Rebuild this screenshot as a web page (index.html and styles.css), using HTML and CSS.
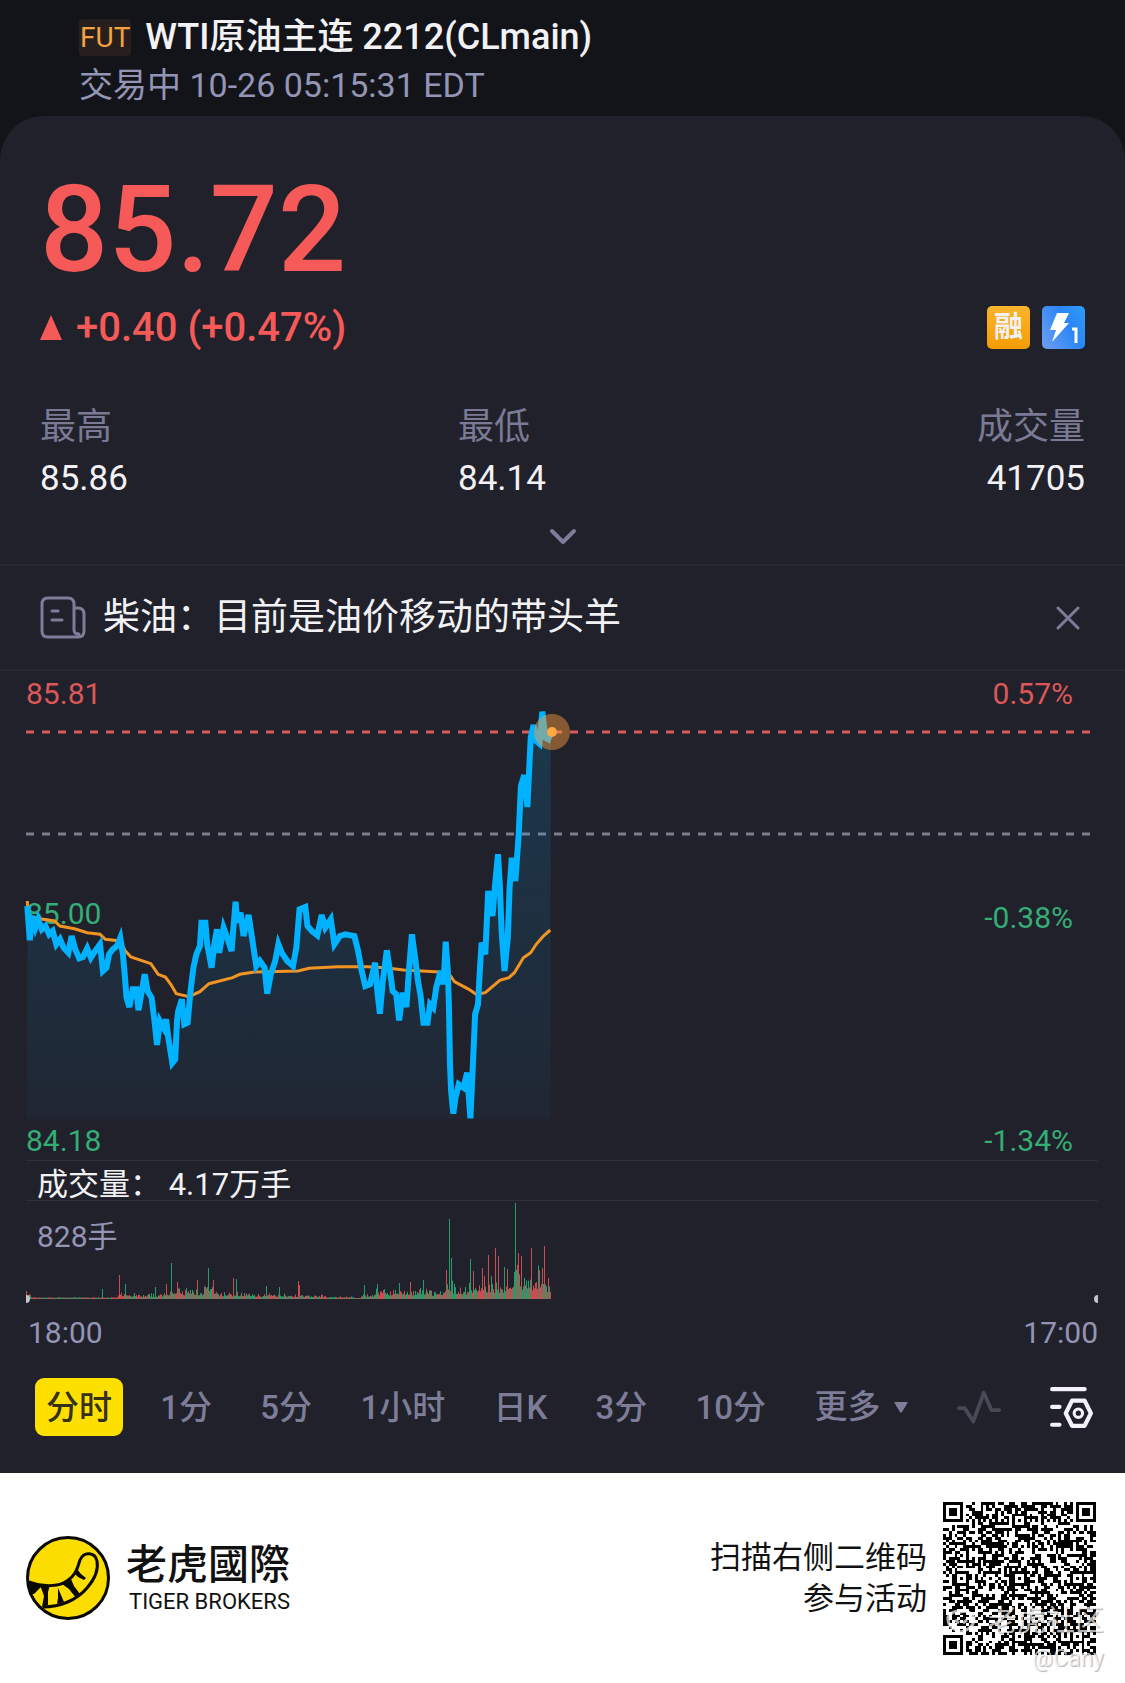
FILE: index.html
```html
<!DOCTYPE html>
<html lang="zh-CN">
<head>
    <meta charset="UTF-8">
    <meta name="viewport" content="width=device-width, initial-scale=1.0">
    <title>WTI原油主连 2212(CLmain)</title>
    <link rel="stylesheet" href="styles.css">
</head>
<body>
    <header class="header">
        <h1 class="title"><span class="tag">FUT</span>WTI原油主连 2212(CLmain)</h1>
        <p class="status">交易中 10-26 05:15:31 EDT</p>
    </header>

    <main class="card">
        <section class="quote">
            <div class="price">85.72</div>
            <div class="change-row">
                <div class="change">
                    <svg class="up" viewBox="0 0 22 25"><path d="M11 0L22 25H0Z" fill="#f65a58"/></svg>
                    <span>+0.40 (+0.47%)</span>
                </div>
                <div class="badges">
                    <span class="badge margin">融</span>
                    <span class="badge level">
                        <svg viewBox="0 0 43 43">
                            <path d="M15 7H27L22 17H27L10 36L14 24H8Z" fill="#fff"/>
                            <path d="M30 23H34V37" fill="none" stroke="#fff" stroke-width="3"/>
                        </svg>
                    </span>
                </div>
            </div>
            <dl class="stats">
                <div><dt>最高</dt><dd>85.86</dd></div>
                <div><dt>最低</dt><dd>84.14</dd></div>
                <div class="right"><dt>成交量</dt><dd>41705</dd></div>
            </dl>
            <button class="expand" aria-label="展开">
                <svg viewBox="0 0 28 18"><path d="M3 3L14 14L25 3"/></svg>
            </button>
        </section>

        <section class="news">
            <svg class="news-icon" viewBox="0 0 46 44">
                <path d="M34 41H8Q2 41 2 35V8Q2 2 8 2H28Q34 2 34 8V34Q34 38 39 38M34 12H38Q44 12 44 18V35Q44 41 38 41H32M12 15H18M12 24H22"/>
            </svg>
            <a href="#" class="news-link">柴油：目前是油价移动的带头羊</a>
            <button class="close" aria-label="关闭">
                <svg viewBox="0 0 26 26"><path d="M3 3L23 23M23 3L3 23"/></svg>
            </button>
        </section>

        <section class="chart">
            <svg class="plot" viewBox="0 0 1072 489">
                <defs>
                    <linearGradient id="fade" x1="0" y1="40" x2="0" y2="448" gradientUnits="userSpaceOnUse">
                        <stop offset="0" stop-color="#00b2ff" stop-opacity="0.16"/>
                        <stop offset="0.85" stop-color="#00b2ff" stop-opacity="0.06"/>
                        <stop offset="1" stop-color="#00b2ff" stop-opacity="0.03"/>
                    </linearGradient>
                </defs>
                <path class="dash last" d="M0 61H1066"/>
                <path class="dash prev" d="M0 163H1066"/>
                <path id="area" fill="url(#fade)"/>
                <text class="red" x="0" y="33">85.81</text>
                <text class="green" x="0" y="253">85.00</text>
                <text class="green" x="0" y="480">84.18</text>
                <text class="red end" x="1047" y="33">0.57%</text>
                <text class="green end" x="1047" y="257">-0.38%</text>
                <text class="green end" x="1047" y="480">-1.34%</text>
                <path id="average"/>
                <path id="line"/>
                <circle cx="526" cy="61" r="18" fill="#ffa03c" fill-opacity="0.45"/>
                <circle cx="526" cy="61" r="5" fill="#ffa940"/>
            </svg>
            <div class="volume-title">成交量<span class="colon">：</span> 4.17万手</div>
            <svg class="volume" viewBox="0 0 1072 104">
                <text x="11" y="46">828手</text>
                <path id="volumeRed" stroke="#c94d50"/>
                <path id="volumeGreen" stroke="#259c69"/>
                <path d="M0 94A4 4 0 0 1 0 102ZM1072 94A4 4 0 0 0 1072 102Z" fill="#c4c4c8"/>
            </svg>
            <div class="time"><span>18:00</span><span>17:00</span></div>
        </section>

        <nav class="tabs">
            <button class="tab active">分时</button>
            <button class="tab">1分</button>
            <button class="tab">5分</button>
            <button class="tab">1小时</button>
            <button class="tab">日K</button>
            <button class="tab">3分</button>
            <button class="tab">10分</button>
            <button class="tab more">更多<svg viewBox="0 0 14 11"><path d="M1 0H13Q14 0 13.500 1L8 10Q7 11 6 10L0.500 1Q0 0 1 0Z" fill="#7d7d98"/></svg></button>
            <button class="tab tool" aria-label="画线">
                <svg viewBox="0 0 46 38"><path d="M2 20H8L17 34L28 4L36 22H44" fill="none" stroke="#494955" stroke-width="4" stroke-linecap="round" stroke-linejoin="round"/></svg>
            </button>
            <button class="tab tool" aria-label="设置">
                <svg viewBox="0 0 42 40">
                    <path d="M3 3H34M3 20H10M3 37H10" fill="none" stroke="#f2f2f8" stroke-width="4" stroke-linecap="round"/>
                    <path d="M22 14H34L40 26L34 38H22L16 26Z" fill="none" stroke="#f2f2f8" stroke-width="4" stroke-linejoin="round"/>
                    <circle cx="28" cy="26" r="4" fill="none" stroke="#f2f2f8" stroke-width="3"/>
                </svg>
            </button>
        </nav>
    </main>

    <footer class="footer">
        <svg class="logo" viewBox="0 0 84 84">
            <circle cx="42" cy="42" r="40.500" fill="#fbdd00" stroke="#0b0906" stroke-width="3"/>
            <path d="M3 46C16 51 33 51 41 45C50 39 51 33 54 24C58 15 69 16 71 25C73 35 67 45 61 52C51 64 34 71 17 71" fill="none" stroke="#0b0906" stroke-width="3"/>
            <path d="M2 46L16 50L8 58L5 58ZM14 49H24L22 56V69L16 71L18 60ZM32 52L38 66L31 68L32 62ZM36 48L45 43L48 50L54 58L50 62L43 53ZM48 37L51 33L55 38L60 42L58 44L52 41Z" fill="#0b0906"/>
        </svg>
        <div class="brand">
            <div class="brand-cn">老虎國際</div>
            <div class="brand-en">TIGER BROKERS</div>
        </div>
        <p class="scan">扫描右侧二维码<br>参与活动</p>
        <div class="qr">
            <svg viewBox="0 0 53 53" shape-rendering="crispEdges"><path id="qrCode" fill="#000"/></svg>
            <div class="watermark">
                <span class="community"><svg viewBox="0 0 30 26"><path d="M2 9Q8 1 15 4Q22 1 28 9Q29 20 15 24Q1 20 2 9ZM9 12L13 15M21 12L17 15" fill="none" stroke="#fff" stroke-width="3"/></svg>老虎社区</span>
                <span class="user">@Cany</span>
            </div>
        </div>
    </footer>
    <script src="chart.js"></script>
</body>
</html>
```
FILE: styles.css
```css
* {
    box-sizing: border-box;
}
body {
    margin: 0;
    background-color: #131419;
    color: #f2f2f5;
    font-family: Roboto, "Noto Sans CJK SC", sans-serif;
}
h1, p, dl, dd {
    margin: 0;
}
button {
    background: none;
    border: none;
    padding: 0;
    font-family: inherit;
    cursor: pointer;
}
svg {
    display: block;
}
.header {
    padding: 14px 79px 6px;
}
.title {
    display: flex;
    align-items: center;
    gap: 14px;
    font-size: 36px;
    font-weight: 500;
    line-height: 46px;
}
.tag {
    padding: 0 1px;
    border-radius: 4px;
    background-color: #271f1d;
    color: #f5a244;
    font-size: 28px;
    font-weight: 400;
    line-height: 37px;
}
.status {
    color: #9495b5;
    font-size: 34px;
    line-height: 50px;
}
.card {
    background-color: #21212b;
    border-radius: 44px 44px 0 0;
}
.quote {
    padding: 48px 40px 0;
    border-bottom: 2px solid #292933;
}
.price {
    color: #f65a58;
    font-size: 120px;
    font-weight: 500;
    line-height: 132px;
}
.change-row {
    display: flex;
    justify-content: space-between;
    align-items: center;
    height: 62px;
}
.change {
    display: flex;
    align-items: center;
    gap: 14px;
    color: #f65a58;
    font-size: 40px;
    font-weight: 500;
}
.up {
    width: 22px;
}
.badges {
    display: flex;
    gap: 12px;
}
.badge {
    width: 43px;
    height: 43px;
    border-radius: 5px;
    font-size: 29px;
    font-weight: 700;
    line-height: 43px;
    text-align: center;
}
.margin {
    background: linear-gradient(#f9b52c, #f59c04);
}
.level {
    background: linear-gradient(60deg, #6f9ff0, #2b86f6 60%, #2f9bf8);
}
.stats {
    display: grid;
    grid-template-columns: 40% 1fr auto;
    padding-top: 43px;
    font-size: 36px;
    line-height: 52px;
}
.stats dt {
    color: #7a7a95;
}
.stats dd {
    font-size: 35px;
}
.right {
    text-align: right;
}
.expand {
    display: block;
    margin: 23px auto 18px;
}
.expand svg {
    width: 28px;
}
.expand path, .close path, .news-icon path {
    fill: none;
    stroke: #7d7d9a;
    stroke-width: 4;
    stroke-linecap: round;
    stroke-linejoin: round;
}
.news {
    display: flex;
    align-items: center;
    height: 105px;
    padding: 0 44px 0 40px;
    border-bottom: 2px solid #292933;
}
.news-icon {
    width: 46px;
    margin-right: 17px;
}
.news-icon path, .close path {
    stroke-width: 3;
}
.news-link {
    flex: 1;
    color: #f2f2f5;
    font-size: 37px;
    line-height: 52px;
    text-decoration: none;
}
.close svg {
    width: 26px;
}
.chart {
    padding: 0 27px 0 26px;
}
.plot, .volume {
    width: 100%;
    height: auto;
    overflow: visible;
}
.plot text, .volume text {
    font-size: 30px;
}
.plot .red {
    fill: #dc5758;
}
.plot .green {
    fill: #34ad76;
}
.plot .end {
    text-anchor: end;
}
.dash {
    stroke-width: 3;
    stroke-dasharray: 8 8;
}
.last {
    stroke: #d85c5d;
}
.prev {
    stroke: #7e7e8c;
}
#line {
    fill: none;
    stroke: #00b2ff;
    stroke-width: 6;
}
#average {
    fill: none;
    stroke: #f29424;
    stroke-width: 3;
}
.volume-title {
    height: 41px;
    padding-left: 11px;
    border-top: 1px solid #30303b;
    border-bottom: 1px solid #30303b;
    font-size: 31px;
    line-height: 41px;
}
.colon {
    font-family: "Noto Sans CJK TC", sans-serif;
}
.volume text {
    fill: #9495b5;
}
.time {
    display: flex;
    justify-content: space-between;
    padding-left: 2px;
    color: #9495b5;
    font-size: 30px;
    line-height: 56px;
}
.tabs {
    display: flex;
    justify-content: space-between;
    align-items: center;
    padding: 17px 21px 37px 35px;
}
.tab {
    height: 58px;
    padding: 0 11px;
    color: #7d7d98;
    font-size: 33px;
    font-weight: 500;
    line-height: 60px;
}
.active {
    border-radius: 9px;
    background-color: #fee000;
    color: #36311a;
}
.more {
    display: flex;
    align-items: center;
    gap: 14px;
}
.more svg {
    width: 14px;
}
.tool svg {
    width: 44px;
}
.footer {
    display: flex;
    align-items: center;
    height: 210px;
    padding: 0 29px 0 26px;
    background-color: #fff;
    color: #111;
}
.logo {
    width: 84px;
    margin-right: 16px;
}
.brand-cn {
    font-size: 41px;
    font-weight: 500;
    line-height: 48px;
}
.brand-en {
    padding-left: 3px;
    font-size: 22px;
    line-height: 26px;
}
.scan {
    margin-left: auto;
    margin-right: 16px;
    font-size: 31px;
    line-height: 41px;
    text-align: right;
}
.qr {
    position: relative;
    width: 153px;
}
.watermark {
    position: absolute;
    right: -8px;
    bottom: -22px;
    display: flex;
    flex-direction: column;
    align-items: flex-end;
    color: rgba(255, 255, 255, 0.7);
    text-shadow: 1px 1px 1px rgba(0, 0, 0, 0.3);
    white-space: nowrap;
}
.community {
    display: flex;
    align-items: center;
    gap: 12px;
    font-size: 29px;
    line-height: 40px;
}
.community svg {
    width: 30px;
    opacity: 0.7;
}
.user {
    font-size: 23px;
    line-height: 36px;
}
```
FILE: chart.js
```js
// x, y samples; one pixel is 2.751 x units and 3 y units
var price = [75,705, 82,808, 88,735, 97,770, 105,745, 115,775, 125,765, 135,790, 145,780, 155,820, 165,805, 175,830, 188,845,
    197,795, 207,835, 218,862, 228,858, 240,832, 250,860, 262,840, 275,820, 283,900, 293,890, 300,850, 310,835, 322,825,
    331,800, 338,850, 343,910, 348,980, 356,1008, 365,955, 375,955, 381,1018, 390,960, 398,910, 406,960, 417,980, 425,1050,
    432,1122, 440,1050, 450,1070, 457,1045, 463,1100, 474,1176, 482,1165, 487,1050, 490,1022, 500,985, 507,1060, 516,1055,
    524,960, 532,890, 540,850, 550,825, 554,755, 565,755, 570,820, 582,890, 590,815, 597,775, 603,845, 615,770, 625,800,
    637,840, 643,760, 648,692, 653,755, 662,725, 670,795, 684,732, 692,790, 700,850, 705,885, 715,870, 728,890, 735,968,
    745,910, 757,870, 766,820, 775,845, 790,870, 806,885, 815,830, 824,715, 840,708, 846,765, 858,780, 873,793, 885,732,
    895,770, 910,745, 920,820, 935,795, 950,790, 975,795, 985,840, 995,900, 1005,945, 1018,940, 1032,875, 1038,960,
    1045,1028, 1053,930, 1064,838, 1073,900, 1080,960, 1090,970, 1098,1048, 1108,965, 1118,1008, 1125,900, 1133,790,
    1142,860, 1150,930, 1157,975, 1165,1055, 1176,1055, 1183,1000, 1192,1010, 1200,950, 1212,900, 1220,940, 1226,812,
    1232,900, 1235,1000, 1238,1180, 1241,1260, 1247,1328, 1253,1280, 1262,1240, 1275,1250, 1285,1205, 1294,1342, 1300,1200,
    1307,1030, 1315,1000, 1320,900, 1325,815, 1335,850, 1343,660, 1355,735, 1362,640, 1370,550, 1375,640, 1380,780,
    1388,900, 1397,800, 1402,650, 1408,560, 1418,630, 1427,490, 1433,345, 1442,312, 1451,408, 1460,200, 1468,162,
    1475,210, 1484,218, 1492,122, 1500,200, 1508,205, 1515,183];
var average = [75,690, 78,735, 100,742, 150,750, 165,765, 205,773, 240,785, 275,790, 290,805, 330,810, 345,840, 360,858,
    415,878, 435,910, 455,918, 470,940, 485,968, 520,977, 550,962, 575,938, 640,920, 660,910, 700,903, 820,900, 850,892,
    930,887, 1010,887, 1060,890, 1110,897, 1210,903, 1235,908, 1250,932, 1290,955, 1310,970, 1335,965, 1375,928, 1400,920,
    1415,905, 1440,860, 1460,845, 1475,820, 1495,795, 1514,777];

function toPath(data) {
    var points = [];
    for (var i = 0; i < data.length; i += 2) {
        points.push((data[i] / 2.751 - 26).toFixed(1) + ' ' + (data[i + 1] / 3).toFixed(1));
    }
    return 'M' + points.join('L');
}
document.getElementById('line').setAttribute('d', toPath(price));
document.getElementById('area').setAttribute('d', toPath(price) + 'V448H1Z');
document.getElementById('average').setAttribute('d', toPath(average));

var seed = 7;
function random() {
    seed = (seed * 16807) % 2147483647;
    return seed / 2147483647;
}

// usual volume height from each x on
var levels = [[0, 8], [5, 1], [92, 7], [110, 5], [138, 13], [178, 17], [188, 8], [225, 6], [270, 4], [300, 2], [328, 0],
    [335, 6], [350, 13], [400, 11], [420, 20], [434, 16], [442, 26], [462, 26], [480, 38], [498, 38], [520, 28]];
var spikes = {0: [8, 1], 76: [10, 0], 93: [24, 1], 99: [15, 0], 129: [12, 0], 140: [15, 1], 145: [36, 0], 151: [17, 1],
    171: [19, 1], 182: [31, 0], 187: [19, 1], 207: [21, 1], 210: [20, 0], 240: [13, 0], 253: [12, 0], 272: [18, 1],
    273: [14, 1], 338: [14, 0], 351: [15, 0], 373: [16, 0], 384: [17, 1], 397: [19, 0], 420: [29, 1], 423: [80, 0],
    425: [41, 0], 444: [40, 0], 447: [28, 1], 456: [31, 1], 462: [44, 1], 469: [51, 1], 472: [43, 1], 478: [32, 0],
    489: [96, 0], 492: [46, 1], 495: [43, 1], 505: [51, 1], 516: [31, 1], 518: [53, 1], 522: [21, 1]};
var red = '';
var green = '';
for (var x = 0; x < 525; x++) {
    var level = 0;
    levels.forEach(function(l) {
        if (x >= l[0]) level = l[1];
    });
    var height = 1 + (0.2 + 0.8 * random() * random()) * level;
    var isRed = random() > 0.48;
    if (spikes[x]) {
        height = spikes[x][0];
        isRed = spikes[x][1] === 1;
    }
    var bar = 'M' + (x + 0.5) + ' 98v-' + height.toFixed(1);
    if (isRed) red += bar; else green += bar;
}
document.getElementById('volumeRed').setAttribute('d', red);
document.getElementById('volumeGreen').setAttribute('d', green);

// square rings of the code: finders in three corners, small ones inside
function ring(col, row, cx, cy, radius) {
    var d = Math.max(Math.abs(col - cx), Math.abs(row - cy));
    if (d > radius) return null;
    return radius === 4 ? d !== 4 && d !== 2 : d !== 1;
}
var marks = [[3, 3, 4], [49, 3, 4], [3, 49, 4], [26, 6, 2], [6, 26, 2], [26, 26, 2], [46, 26, 2], [26, 46, 2], [46, 46, 2]];
var modules = '';
for (var row = 0; row < 53; row++) {
    for (var col = 0; col < 53; col++) {
        var dark = random() > 0.47;
        if (row === 6) dark = col % 2 === 0;
        if (col === 6) dark = row % 2 === 0;
        marks.forEach(function(m) {
            var value = ring(col, row, m[0], m[1], m[2]);
            if (value !== null) dark = value;
        });
        if (dark) modules += 'M' + col + ' ' + row + 'h1v1h-1z';
    }
}
document.getElementById('qrCode').setAttribute('d', modules);
```
